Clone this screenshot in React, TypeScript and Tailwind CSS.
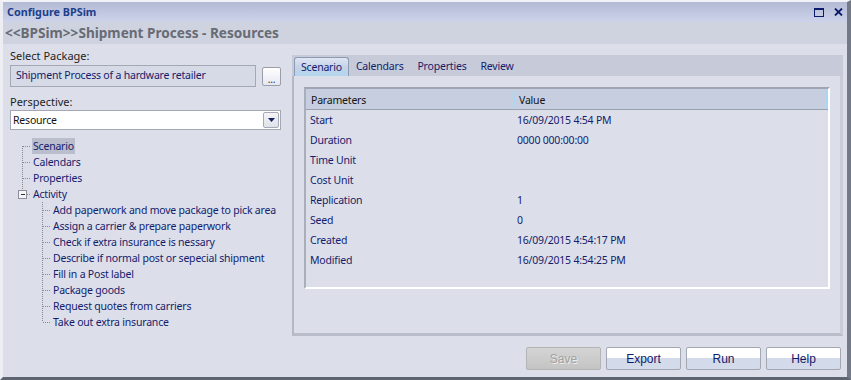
import React from 'react';

const children = [
  'Add paperwork and move package to pick area',
  'Assign a carrier & prepare paperwork',
  'Check if extra insurance is nessary',
  'Describe if normal post or sepecial shipment',
  'Fill in a Post label',
  'Package goods',
  'Request quotes from carriers',
  'Take out extra insurance',
];

const rows: [string, string][] = [
  ['Start', '16/09/2015 4:54 PM'],
  ['Duration', '0000 000:00:00'],
  ['Time Unit', ''],
  ['Cost Unit', ''],
  ['Replication', '1'],
  ['Seed', '0'],
  ['Created', '16/09/2015 4:54:17 PM'],
  ['Modified', '16/09/2015 4:54:25 PM'],
];

// dotted tree connector, 19x16
const Connector = ({ kind }: { kind: 'first' | 'mid' | 'last' | 'box' }) => (
  <svg width="19" height="16" className="shrink-0" shapeRendering="crispEdges">
    {kind === 'first' && <line x1="9.5" y1="8" x2="9.5" y2="16" stroke="#8a8a8a" strokeDasharray="1 1" />}
    {kind === 'mid' && <line x1="9.5" y1="0" x2="9.5" y2="16" stroke="#8a8a8a" strokeDasharray="1 1" />}
    {kind === 'last' && <line x1="9.5" y1="0" x2="9.5" y2="8" stroke="#8a8a8a" strokeDasharray="1 1" />}
    {kind === 'box' ? (
      <>
        <line x1="9.5" y1="0" x2="9.5" y2="4" stroke="#8a8a8a" strokeDasharray="1 1" />
        <rect x="5.5" y="4.5" width="8" height="8" fill="#f4f5f8" stroke="#8c8f99" />
        <line x1="7.5" y1="8.5" x2="11.5" y2="8.5" stroke="#333" />
        <line x1="14" y1="8.5" x2="18" y2="8.5" stroke="#8a8a8a" strokeDasharray="1 1" />
      </>
    ) : (
      <line x1="10" y1="8.5" x2="18" y2="8.5" stroke="#8a8a8a" strokeDasharray="1 1" />
    )}
  </svg>
);

const Btn = ({ label, disabled }: { label: string; disabled?: boolean }) => (
  <div
    className={`w-[75px] h-[23px] rounded-[2px] border flex items-center justify-center font-['Liberation_Sans',sans-serif] text-[12px] tracking-normal ${
      disabled
        ? 'border-[#b4b4b4] bg-gradient-to-b from-[#d4d4d4] to-[#c4c4c4] text-[#a2a2a2] [text-shadow:1px_1px_0_#eee]'
        : 'border-[#a3a7b3] bg-gradient-to-b from-white from-50% to-[#d3daea] to-50% text-[#101a6a]'
    }`}
  >
    {label}
  </div>
);

export default function App() {
  return (
    <div className="w-[851px] h-[380px] flex flex-col bg-[#dcdfea] border-t-2 border-t-[#f2f3f6] border-l-[3px] border-l-[#eceef3] border-r-4 border-r-[#737986] border-b-[3px] border-b-[#5e6470] font-['Noto_Sans',sans-serif] text-[10.5px] tracking-[-0.2px] overflow-hidden whitespace-nowrap">
      <div className="h-[20px] shrink-0 flex items-center justify-between bg-gradient-to-b from-[#b3bad3] to-[#ccd3eb] pl-[4px] pr-[4px]">
        <span className="font-bold text-[10.8px] tracking-normal text-[#1d3e8c]">Configure BPSim</span>
        <div className="flex items-center gap-[10px]">
          <svg width="10" height="9" shapeRendering="crispEdges">
            <rect x="0.5" y="0.5" width="9" height="8" fill="none" stroke="#0b1a6a" />
            <line x1="0" y1="1.5" x2="10" y2="1.5" stroke="#0b1a6a" />
          </svg>
          <svg width="9" height="8">
            <path d="M1 0.5 L8 7.5 M8 0.5 L1 7.5" stroke="#0b1a6a" strokeWidth="1.8" />
          </svg>
        </div>
      </div>
      <div className="h-[22px] shrink-0 flex items-center bg-[#cfd3df] pl-[2px]">
        <span className="font-bold text-[13.6px] tracking-normal text-[#676b75]">{'<<BPSim>>Shipment Process - Resources'}</span>
      </div>
      <div className="flex-1 flex min-h-0">
        <div className="w-[289px] shrink-0 pl-[7px] pt-[3px] flex flex-col">
          <div className="h-[16px] pt-[2px] flex items-center text-[#1e1e24] text-[11px] tracking-normal">Select Package:</div>
          <div className="mt-[2px] flex items-center">
            <div className="w-[246px] h-[22px] border border-[#a4a8b4] bg-[#d6dae6] flex items-center pl-[5px] text-[#16206a]">
              Shipment Process of a hardware retailer
            </div>
            <div className="ml-[6px] w-[19px] h-[19px] rounded-[2px] border border-[#9a9ea9] bg-gradient-to-b from-white to-[#e4e8f2] flex items-end justify-center text-[10px] leading-[12px] text-[#333]">
              ...
            </div>
          </div>
          <div className="mt-[6px] h-[16px] pt-[2px] flex items-center text-[#1e1e24] text-[11px] tracking-normal">Perspective:</div>
          <div className="mt-[1px] w-[271px] h-[20px] border border-[#a4a8b4] bg-white flex items-center justify-between pl-[2px] pr-[1px] text-[#111]">
            <span className="pt-[2px]">Resource</span>
            <div className="w-[16px] h-[16px] rounded-[2px] border border-[#a6aab4] bg-gradient-to-b from-[#f4f5f8] to-[#dfe2ea] flex items-center justify-center">
              <svg width="7" height="4"><path d="M0 0 H7 L3.5 4 Z" fill="#142060" /></svg>
            </div>
          </div>
          <div className="mt-[8px] flex flex-col text-[#141c6c]">
            {['Scenario', 'Calendars', 'Properties'].map((t, i) => (
              <div key={t} className="h-[16px] flex items-center ml-[3px]">
                <Connector kind={i === 0 ? 'first' : 'mid'} />
                <span className={`px-[1px] pt-[2px] h-[16px] flex items-center ${i === 0 ? 'bg-[#b9bdcc]' : ''}`}>{t}</span>
              </div>
            ))}
            <div className="h-[16px] flex items-center ml-[3px]">
              <Connector kind="box" />
              <span className="px-[1px] pt-[2px]">Activity</span>
            </div>
            {children.map((t, i) => (
              <div key={t} className="h-[16px] flex items-center ml-[23px]">
                <Connector kind={i === children.length - 1 ? 'last' : 'mid'} />
                <span className="px-[1px] pt-[2px]">{t}</span>
              </div>
            ))}
          </div>
        </div>

        <div className="flex-1 flex flex-col pt-[11px] pr-[4px]">
          <div className="h-[21px] shrink-0 bg-[#c7cbd9] flex items-end pl-[2px] text-[#141c6c]">
            <div className="h-[19px] px-[6px] pt-[1px] flex items-center rounded-t-[3px] border border-b-0 border-[#8c9ab2] bg-gradient-to-b from-[#dfe6f3] via-[#c5d3e8] to-[#b2d6ee] text-[#141c6c]">
              Scenario
            </div>
            {['Calendars', 'Properties', 'Review'].map((t) => (
              <div key={t} className="h-[19px] px-[7px] pt-[1px] flex items-center">{t}</div>
            ))}
          </div>
          <div className="h-[260px] shrink-0 border-l-2 border-l-[#b3b8c4] border-b-[3px] border-b-[#b9bdc9] border-r-[3px] border-r-[#c9cdd8] pl-[10px] pt-[11px]">
            <div className="w-[526px] h-[202px] border-t-2 border-l-2 border-t-[#a0a5b3] border-l-[#a9aebb] border-b-2 border-r-2 border-b-white border-r-white bg-[#dcdfea] flex flex-col">
              <div className="h-[21px] shrink-0 flex items-center bg-[#c6cedf] border-b border-b-[#9ba1b1] text-[#141414]">
                <div className="w-[208px] pl-[5px] pt-[4px]">Parameters</div>
                <div className="w-px h-[17px] bg-[#a9d6f2]" />
                <div className="flex-1 pl-[4px] pt-[4px]">Value</div>
                <div className="w-[2px] h-[19px] bg-[#a9d6f2]" />
              </div>
              {rows.map(([k, v]) => (
                <div key={k} className="h-[20px] shrink-0 pt-[2px] flex items-center text-[#141c6c]">
                  <div className="w-[211px] pl-[4px]">{k}</div>
                  <div className="flex-1">{v}</div>
                </div>
              ))}
            </div>
          </div>
          <div className="mt-[11px] flex justify-end gap-[5px] pr-[2px]">
            <Btn label="Save" disabled />
            <Btn label="Export" />
            <Btn label="Run" />
            <Btn label="Help" />
          </div>
        </div>
      </div>
    </div>
  );
}
